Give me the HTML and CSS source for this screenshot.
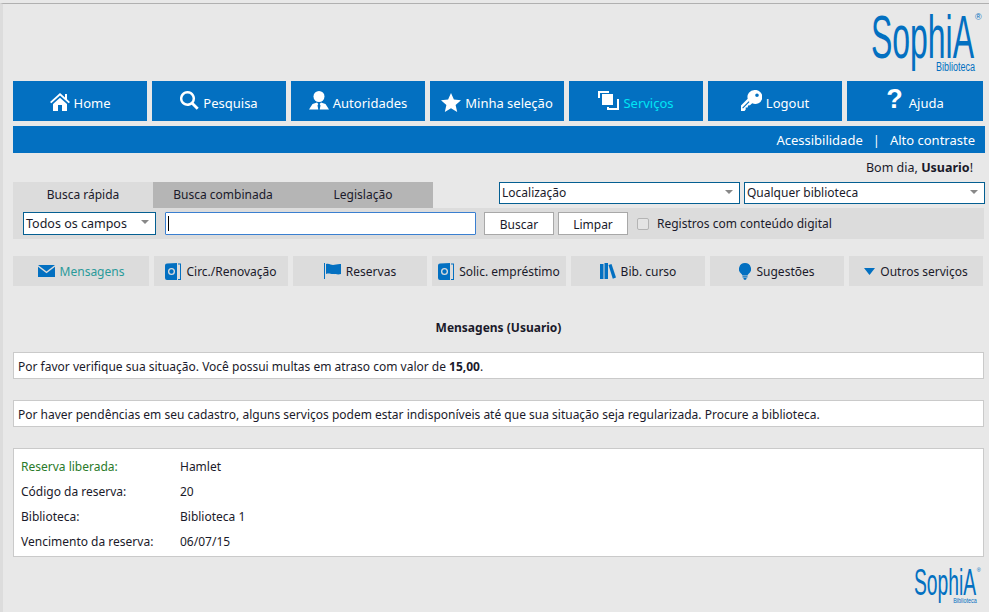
FILE: index.html
```html
<!DOCTYPE html>
<html>
<head>
    <meta charset="utf-8">
    <link rel="stylesheet" href="styles.css">
</head>
<body>
    <div class="page">
        <!-- Logo -->
        <div class="header">
            <svg class="logo" viewBox="0 0 116 62" width="116" height="62">
                <text x="0" y="46" class="logo-name" textLength="103" lengthAdjust="spacingAndGlyphs">SophiA</text>
                <text x="104" y="8" class="logo-reg">®</text>
                <text x="65" y="59" class="logo-sub" textLength="39" lengthAdjust="spacingAndGlyphs">Biblioteca</text>
            </svg>
        </div>

        <!-- Main menu -->
        <div class="nav">
            <a class="nav-item">
                <svg viewBox="0 0 20 18" width="20" height="18"><path d="M10 0 0 9l1.3 1.3L10 2.6l8.7 7.7L20 9l-3-2.7V1h-2v3.5z"/><path d="M3 11 10 4.8 17 11v7h-5v-6H8v6H3z"/></svg>
                <span>Home</span>
            </a>
            <a class="nav-item">
                <svg class="up" viewBox="0 0 19 19" width="19" height="19"><path d="M7.5 0a7.5 7.5 0 1 0 4.2 13.7l5 5 2-2-5-5A7.5 7.5 0 0 0 7.5 0zm0 2.4a5.1 5.1 0 1 1 0 10.2 5.1 5.1 0 0 1 0-10.2z"/></svg>
                <span>Pesquisa</span>
            </a>
            <a class="nav-item">
                <svg class="up" viewBox="0 0 20 19" width="20" height="19"><circle cx="10" cy="5.5" r="5.5"/><path d="M0 18.5 3.5 13l4.5-1.5 1.3 1.5-.8 1.5.8 4H0zM20 18.5 16.5 13 12 11.500l-1.300 1.500.8 1.500-.8 4H20z"/></svg>
                <span>Autoridades</span>
            </a>
            <a class="nav-item">
                <svg viewBox="0 0 20 19" width="20" height="19"><path d="m10 0 2.900 6.600 7.100.7-5.400 4.700 1.600 7L10 15.300 3.800 19l1.600-7L0 7.300l7.100-.7z"/></svg>
                <span>Minha seleção</span>
            </a>
            <a class="nav-item nav-active">
                <svg class="up" viewBox="0 0 21 19" width="21" height="19"><path d="M0 0h11v2H2v5H0z"/><path d="M4 3h11v11H4z"/><path d="M17 7h3v11H8v-3h2v1h8V7z" transform="translate(1 1)"/></svg>
                <span>Serviços</span>
            </a>
            <a class="nav-item">
                <svg class="up" viewBox="0 0 21 21" width="21" height="21"><path d="M13.500 0a7 7 0 0 0-6.800 8.800L0 15.500V21h3.500l1.200-1.500V17.500h2l.3-2 2-.2 2.200-2.100A7 7 0 1 0 13.500 0zM2 18.500l-.8-.8 6.500-6.500.8.8zM16 3.500a1.800 1.800 0 1 1 0 3.600 1.800 1.800 0 0 1 0-3.600z"/></svg>
                <span>Logout</span>
            </a>
            <a class="nav-item nav-last">
                <span class="help-mark">?</span>
                <span>Ajuda</span>
            </a>
        </div>

        <div class="subnav">
            <a>Acessibilidade</a>
            <span class="sep">|</span>
            <a>Alto contraste</a>
        </div>

        <div class="greeting">Bom dia, <b>Usuario</b>!</div>

        <!-- Search -->
        <div class="search-top">
            <div class="tabs">
                <div class="tab tab-active">Busca rápida</div>
                <div class="tab">Busca combinada</div>
                <div class="tab">Legislação</div>
            </div>
            <div class="filters">
                <div class="select select-wide">Localização</div>
                <div class="select select-wide">Qualquer biblioteca</div>
            </div>
        </div>
        <div class="search-bar">
            <div class="select select-field">Todos os campos</div>
            <div class="search-input"><i class="caret"></i></div>
            <button class="btn">Buscar</button>
            <button class="btn">Limpar</button>
            <span class="check"></span>
            <span class="check-label">Registros com conteúdo digital</span>
        </div>

        <!-- Services -->
        <div class="services">
            <a class="service service-active">
                <svg viewBox="0 0 17 12" width="17" height="12"><path d="M0 0h17L8.500 6.500z"/><path d="M0 1.800 8.500 8.300 17 1.800V12H0z"/></svg>
                <span>Mensagens</span>
            </a>
            <a class="service">
                <svg viewBox="0 0 16 17" width="16" height="17"><path fill-rule="evenodd" d="M2 .5 12 0v17H2a2 2 0 0 1-2-2V2.500a2 2 0 0 1 2-2zM6.500 5a3.500 3.500 0 1 0 0 7 3.500 3.500 0 0 0 0-7zm0 1.300a2.200 2.200 0 1 1 0 4.400 2.200 2.200 0 0 1 0-4.400z"/><circle cx="6.500" cy="8.500" r=".9"/><path d="M13 .5h3v16.500h-3v-1h2V1.500h-2z"/></svg>
                <span>Circ./Renovação</span>
            </a>
            <a class="service">
                <svg viewBox="0 0 17 16" width="17" height="16"><path d="M0 0h1v16H0z"/><path d="M2 1c3-1 5 1 7 1s4-1 7-1h1v10c-3 1-5 0-8 0s-4-1-7 0z"/></svg>
                <span>Reservas</span>
            </a>
            <a class="service">
                <svg viewBox="0 0 16 17" width="16" height="17"><path fill-rule="evenodd" d="M2 .5 12 0v17H2a2 2 0 0 1-2-2V2.500a2 2 0 0 1 2-2zM6.500 5a3.500 3.500 0 1 0 0 7 3.500 3.500 0 0 0 0-7zm0 1.300a2.200 2.200 0 1 1 0 4.400 2.200 2.200 0 0 1 0-4.400z"/><circle cx="6.500" cy="8.500" r=".9"/><path d="M13 .5h3v16.500h-3v-1h2V1.500h-2z"/></svg>
                <span>Solic. empréstimo</span>
            </a>
            <a class="service">
                <svg viewBox="0 0 16 16" width="16" height="16"><path d="M0 1h3.500v15H0zM4.500 0H8v16H4.500z"/><path d="m8.500 2 3-1L16 14.500l-3.200 1.200z"/></svg>
                <span>Bib. curso</span>
            </a>
            <a class="service">
                <svg viewBox="0 0 12 17" width="12" height="17"><path d="M6 0a6 6 0 0 0-3.500 10.900c.6.500.8 1.100.8 1.600h5.400c0-.5.2-1.100.8-1.600A6 6 0 0 0 6 0z"/><path d="M3.500 13.300h5v1.200h-5zM4.300 15h3.400l-.7 1.800H5z"/></svg>
                <span>Sugestões</span>
            </a>
            <a class="service">
                <svg viewBox="0 0 11 7" width="11" height="7"><path d="M0 0h11L5.500 7z"/></svg>
                <span>Outros serviços</span>
            </a>
        </div>

        <!-- Messages -->
        <h1 class="title">Mensagens (Usuario)</h1>
        <div class="box notice">Por favor verifique sua situação. Você possui multas em atraso com valor de <b>15,00</b>.</div>
        <div class="box notice">Por haver pendências em seu cadastro, alguns serviços podem estar indisponíveis até que sua situação seja regularizada. Procure a biblioteca.</div>
        <div class="box details">
            <div class="label label-ok">Reserva liberada:</div><div>Hamlet</div>
            <div class="label">Código da reserva:</div><div>20</div>
            <div class="label">Biblioteca:</div><div>Biblioteca 1</div>
            <div class="label">Vencimento da reserva:</div><div>06/07/15</div>
        </div>

        <div class="footer">
            <svg class="logo-small" viewBox="0 0 116 62" width="70" height="38">
                <text x="0" y="46" class="logo-name" textLength="103" lengthAdjust="spacingAndGlyphs">SophiA</text>
                <text x="104" y="8" class="logo-reg">®</text>
                <text x="65" y="59" class="logo-sub" textLength="39" lengthAdjust="spacingAndGlyphs">Biblioteca</text>
            </svg>
        </div>
    </div>
</body>
</html>
```

FILE: styles.css
```css
* {
    box-sizing: border-box;
}

html, body {
    height: 100%;
}

body {
    margin: 0;
    background: #e8e8e8;
    color: #1a1a2a;
    font-family: 'Noto Sans', sans-serif;
    font-size: 12px;
    overflow: hidden;
}

.page {
    height: 612px;
    border-top: 1px solid #b0b0b0;
    border-left: 3px solid #dcdcdc;
    margin-top: 3px;
    padding: 0 5px 0 10px;
}

.header {
    display: flex;
    justify-content: flex-end;
    height: 77px;
    padding: 8px 0 0;
    margin-right: -3px;
}

.logo {
    display: block;
}

.logo-name {
    font-family: 'Liberation Sans', sans-serif;
    font-size: 62px;
    fill: #0370c1;
}

.logo-reg {
    font-family: 'Liberation Sans', sans-serif;
    font-size: 9px;
    fill: #0370c1;
}

.logo-sub {
    font-family: 'Liberation Sans', sans-serif;
    font-size: 12px;
    fill: #0370c1;
}

/* main menu */
.nav {
    display: flex;
    gap: 5px;
    height: 40px;
}

.nav-item {
    flex: 0 0 134px;
    display: flex;
    align-items: center;
    justify-content: center;
    gap: 4px;
    background: #0370c1;
    color: #fff;
    font-size: 13px;
    padding-top: 4px;
}

.nav-item svg {
    fill: #fff;
    flex: none;
    margin-top: -2px;
}

.nav-item svg.up {
    margin-top: -6px;
}

.nav-last {
    flex-basis: 136px;
}

.nav-active span {
    color: #00e5f5;
}

.help-mark {
    font-family: 'Liberation Sans', sans-serif;
    font-weight: bold;
    font-size: 27px;
    line-height: 27px;
    margin: -7px 2px 0 0;
}

.subnav {
    display: flex;
    justify-content: flex-end;
    align-items: center;
    gap: 10px;
    height: 27px;
    margin-top: 5px;
    margin-right: -1px;
    padding-right: 10px;
    background: #0370c1;
    color: #fff;
    font-size: 13px;
}

.greeting {
    height: 29px;
    padding: 6px 11px 0 0;
    text-align: right;
    font-size: 12.500px;
}

/* search */
.search-top {
    display: flex;
    justify-content: space-between;
    height: 26px;
    margin-right: -1px;
}

.tabs {
    display: flex;
}

.tab {
    width: 140px;
    height: 26px;
    line-height: 26px;
    text-align: center;
    background: #b5b5b5;
}

.tab-active {
    background: #dcdcdc;
}

.filters {
    display: flex;
    gap: 4px;
    height: 22px;
}

.select {
    position: relative;
    height: 22px;
    line-height: 20px;
    padding-left: 2px;
    background: #fff;
    border: 1px solid #045f92;
}

.select::after {
    content: "";
    position: absolute;
    top: 7px;
    right: 6px;
    border-style: solid;
    border-width: 4px 4px 0;
    border-color: #888 transparent transparent;
}

.select-wide {
    width: 241px;
}

.select-field {
    width: 133px;
    height: 23px;
    line-height: 22px;
    font-size: 12.500px;
}

.search-bar {
    display: flex;
    align-items: center;
    height: 31px;
    padding-left: 10px;
    background: #dcdcdc;
}

.search-input {
    width: 311px;
    height: 23px;
    margin-left: 9px;
    padding: 3px 0 0 2px;
    background: #fff;
    border: 1px solid #3a7fd0;
    border-radius: 1px;
}

.caret {
    display: block;
    width: 1px;
    height: 15px;
    background: #000;
}

.btn {
    width: 70px;
    height: 23px;
    margin-left: 4px;
    padding: 2px 0 0;
    background: #fff;
    border: 1px solid #a8a8a8;
    color: inherit;
    font: inherit;
}

.btn:first-of-type {
    margin-left: 8px;
}

.check {
    width: 12px;
    height: 12px;
    margin: 1px 8px 0 9px;
    background: #e4e4e4;
    border: 1px solid #b4b4b4;
    border-radius: 2px;
}

/* services */
.services {
    display: flex;
    gap: 5px;
    height: 30px;
    margin-top: 17px;
}

.service {
    flex: 0 0 134px;
    display: flex;
    align-items: center;
    justify-content: center;
    gap: 5px;
    background: #dcdcdc;
}

.service:first-child {
    flex-basis: 136px;
}

.service svg {
    fill: #0370c1;
    flex: none;
}

.service-active {
    color: #2a9a9a;
}

/* messages */
.title {
    margin: 33px 0 0;
    height: 33px;
    text-align: center;
    font-size: 12px;
    font-weight: bold;
}

.box {
    background: #fff;
    border: 1px solid #cacaca;
}

.notice {
    height: 27px;
    line-height: 27px;
    margin-bottom: 21px;
    padding-left: 4px;
}

.details {
    display: grid;
    grid-template-columns: 159px 1fr;
    grid-auto-rows: 25px;
    align-items: center;
    height: 109px;
    padding: 5px 7px;
}

.label-ok {
    color: #2a7a2a;
}

.footer {
    display: flex;
    justify-content: flex-end;
    padding-top: 10px;
}
```
